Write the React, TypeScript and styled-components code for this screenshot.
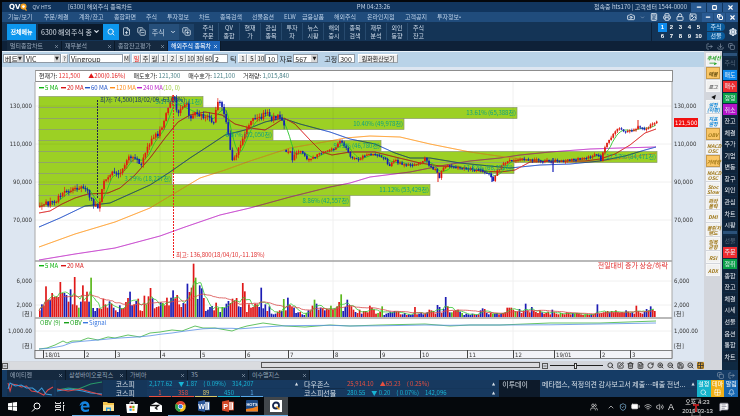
import React from "react";
import styled, { createGlobalStyle, css } from "styled-components";
import {
  Camera, Calculator, Printer, Lock, Image as ImageIcon, Search, Settings, ChevronDown, ChevronUp,
  FilePlus, CopyMinus, CopyPlus, LogOut, Download, Copy, Minus, Square, X, Users, ShieldCheck,
  BatteryFull, Wifi, Volume2, MessageSquareText, Bell, Grid2x2, SquarePen, ZoomIn, ZoomOut,
  Save, Trash2, FileText, RotateCw, SearchCheck,
} from "lucide-react";

const sans = `"Liberation Sans Narrow", "Noto Sans CJK KR", "Liberation Sans", sans-serif`;

const Global = createGlobalStyle`
  * { box-sizing: border-box; }
  body { margin: 0; background: #04070c; font-family: ${sans}; font-size: 7px; line-height: 8px; }
  button, input, select { font: inherit; color: inherit; margin: 0; padding: 0; border: 0; border-radius: 0; background: none; }
  svg { display: block; flex: none; }
  a { color: inherit; text-decoration: none; }
  h1 { margin: 0; }
`;

const Shell = styled.div`
  display: flex;
  flex-direction: column;
  min-height: 100vh;
  padding-top: 2px;
`;
const Framed = styled.div`
  border: solid #05080d;
  border-width: 0 2px;
`;

/* ---------- title and menu ---------- */
const TitleBar = styled.header`
  display: grid;
  grid-template-columns: 1fr auto 1fr;
  align-items: center;
  height: 10px;
  padding-left: 7px;
  background: #11355e;
  color: #c3d3e6;
  font-size: 6px;
`;
const Brand = styled.div`
  display: flex;
  align-items: center;
  gap: 5px;
  white-space: nowrap;
`;
const Logo = styled.h1`
  display: flex;
  align-items: center;
  color: #fff;
  font: bold 7px/9px "DejaVu Sans", sans-serif;
`;
const Product = styled.span`
  margin-right: 12px;
  font: 5px/8px "Liberation Sans", sans-serif;
`;
const TitleRight = styled.div`
  display: flex;
  justify-content: flex-end;
  align-items: center;
  gap: 4px;
  white-space: nowrap;
`;
const WinButtons = styled.div`
  display: flex;
  gap: 1px;
`;
const WinButton = styled.button<{ $w?: number }>`
  display: grid;
  place-items: center;
  width: ${(p) => p.$w ?? 15}px;
  height: 9px;
  background: #295a92;
  color: #fff;
`;
const MenuBar = styled.nav`
  display: flex;
  align-items: center;
  height: 10px;
  padding-left: 6px;
  background: #204c7c;
  color: #b9cee6;
  font-size: 6px;
  white-space: nowrap;
`;
const MenuItem = styled.a<{ $w: number }>`
  width: ${(p) => p.$w}px;
`;
const MenuTools = styled.div`
  display: flex;
  align-items: center;
  gap: 5px;
  margin-left: auto;
  color: #cdd9e6;
`;

/* ---------- main toolbar ---------- */
const ToolBar = styled.div`
  display: flex;
  align-items: center;
  height: 19px;
  padding-left: 5px;
  background: #143456;
  color: #cfdcea;
`;
const AllMenu = styled.button`
  width: 29px;
  height: 16px;
  background: #0d97ee;
  color: #fff;
  font-weight: bold;
  font-size: 6px;
  white-space: nowrap;
`;
const ScreenBox = styled.label`
  display: flex;
  align-items: center;
  width: 65px;
  height: 16px;
  margin-left: 2px;
  padding: 0 3px;
  background: #0b1a2b;
  color: #d7dfe8;
`;
const ScreenInput = styled.input`
  min-width: 0;
  flex: 1;
`;
const IconButton = styled.button<{ $w: number; $bg?: string }>`
  display: grid;
  place-items: center;
  width: ${(p) => p.$w}px;
  height: 16px;
  background: ${(p) => p.$bg ?? "none"};
  color: #e3edf7;
`;
const StockPick = styled.button`
  display: flex;
  align-items: center;
  justify-content: space-around;
  width: 30px;
  height: 16px;
  background: #264f7a;
`;
const Quick = styled.div`
  display: flex;
  margin-left: 4px;
`;
const QuickButton = styled.button`
  width: 21px;
  height: 17px;
  border-right: 1px solid #274a6e;
  font-size: 6px;
  line-height: 8px;
  white-space: pre;
  &:last-child { border-right: 0; }
`;
const PageGrid = styled.div`
  display: grid;
  grid-template-columns: repeat(5, 9px);
  margin-left: auto;
  padding-left: 6px;
  border-left: 1px solid #0c2038;
`;
const PageButton = styled.button<{ $on: boolean }>`
  height: 9px;
  background: ${(p) => (p.$on ? "#0f8cec" : "none")};
  color: #fff;
  font: bold 6px/9px "Liberation Sans", sans-serif;
`;
const Market = styled.div`
  display: grid;
  gap: 1px;
  margin: 0 3px 0 4px;
`;
const MarketButton = styled.button`
  width: 18px;
  height: 8px;
  border-radius: 0 4px 4px 0;
  background: #0a5c9c;
  color: #d6ecff;
  font-size: 6px;
  line-height: 8px;
`;

/* ---------- tabs ---------- */
const TabRow = styled.div<{ $bg: string }>`
  display: flex;
  height: 10px;
  background: ${(p) => p.$bg};
  padding-left: 5px;
  color: #96a6b8;
`;
const Tab = styled.div<{ $on?: boolean; $w: number }>`
  display: flex;
  align-items: center;
  justify-content: space-between;
  width: ${(p) => p.$w}px;
  padding: 0 2px 0 3px;
  border-right: 1px solid #0a1929;
  background: ${(p) => (p.$on ? "#1b63b8" : "#15293f")};
  color: ${(p) => (p.$on ? "#fff" : "inherit")};
  font-size: 6px;
  white-space: nowrap;
`;
const TabTools = styled.div`
  display: flex;
  align-items: center;
  gap: 4px;
  margin-left: auto;
  padding-right: 3px;
`;

/* ---------- workspace ---------- */
const Work = styled.div`
  display: grid;
  grid-template-columns: minmax(0, 1fr) 18px 16px;
`;
const Main = styled.main`
  background: #dde6f1;
`;
const ChartBar = styled.form`
  display: flex;
  align-items: center;
  height: 16px;
  padding: 0 1px 2px;
  border-top: 1px solid #e9f1f8;
  background: #b9d3e8;
  color: #222;
  > * { flex: none; }
`;
const boxed = css`
  height: 9px;
  border: 1px solid #8f9aa5;
  background: #fff;
`;
const Pick = styled.label<{ $w: number }>`
  ${boxed}
  display: flex;
  align-items: center;
  width: ${(p) => p.$w}px;
  padding-left: 1px;
`;
const PickSelect = styled.select`
  appearance: none;
  flex: 1;
  min-width: 0;
`;
const Caret = styled.span`
  align-self: stretch;
  width: 6px;
  background: #d9d9d9;
  font: 5px/7px "DejaVu Sans", sans-serif;
  text-align: center;
`;
const Field = styled.input<{ $w: number }>`
  ${boxed}
  width: ${(p) => p.$w}px;
  padding: 0 1px;
`;
const Key = styled.button<{ $w?: number; $on?: boolean }>`
  width: ${(p) => p.$w ?? 9}px;
  height: 9px;
  border: 1px solid #9aa3ab;
  border-left-color: #fff;
  border-top-color: #fff;
  background: #ececec;
  color: ${(p) => (p.$on ? "#f01818" : "#222")};
  font-size: 6px;
  line-height: 7px;
  white-space: nowrap;
`;
const BarText = styled.label`
  padding: 0 1px;
  white-space: nowrap;
`;
const Spring = styled.span<{ $w: number }>`
  width: ${(p) => p.$w}px;
`;
const Quote = styled.div`
  display: flex;
  align-items: center;
  gap: 8px;
  height: 12px;
  margin: 3px 31px 0 33px;
  padding-left: 3px;
  border: 1px solid #8d8d8d;
  border-left-color: #aaa;
  background: #fff;
  color: #222;
  font-size: 6px;
  white-space: nowrap;
`;
const Val = styled.span<{ $c: string }>`
  color: ${(p) => p.$c};
`;
const Chart = styled.svg`
  width: 100%;
  height: auto;
`;
const ScrollRow = styled.div`
  display: flex;
  align-items: center;
  gap: 2px;
  height: 9px;
  background: #d3d6dc;
  color: #333;
`;
const Track = styled.div`
  flex: 1;
  display: flex;
  height: 7px;
  padding-left: 251px;
  background: #d9dbdf;
`;
const Thumb = styled.div`
  flex: 1;
  height: 6px;
  border: 1px solid #555;
  background: #dcdcdf;
`;
const Tiny = styled.button`
  display: grid;
  place-items: center;
  width: 6px;
  height: 6px;
  border: 1px solid #555;
`;
const ZoomRange = styled.input`
  appearance: none;
  width: 53px;
  height: 7px;
  background: linear-gradient(#222, #222) center / 100% 1px no-repeat;
  &::-webkit-slider-thumb {
    appearance: none;
    width: 3px;
    height: 6px;
    border: 1px solid #333;
    background: #eee;
  }
`;
const FootIcons = styled.div`
  display: flex;
  gap: 3px;
  padding-left: 2px;
`;
const FootButton = styled.button<{ $on?: boolean }>`
  width: 7px;
  height: 7px;
  background: ${(p) => (p.$on ? "#e6a52a" : "none")};
`;

/* ---------- right-hand columns ---------- */
const Indicators = styled.div`
  display: flex;
  flex-direction: column;
  gap: 1px;
  padding: 2px 2px 0;
  background: #d3d6dc;
`;
const Indicator = styled.button<{ $c: string; $on?: boolean; $tall?: boolean; $arrow?: boolean }>`
  height: ${(p) => (p.$arrow ? 6 : p.$tall ? 13 : 12)}px;
  border: ${(p) => (p.$arrow ? 0 : 1)}px solid ${(p) => (p.$on ? "#c99a48" : "#f7f7f7")};
  background: ${(p) => (p.$arrow ? "none" : p.$on ? "#fac665" : "#f1f1f0")};
  color: ${(p) => p.$c};
  font: italic bold 5px/5px "Liberation Sans Narrow", "Noto Sans CJK KR", sans-serif;
  white-space: pre;
`;
const Side = styled.nav`
  display: flex;
  flex-direction: column;
  padding: 2px 1px 8px;
  background: #0f2942;
`;
const Handle = styled.hr`
  width: 100%;
  height: 3px;
  margin: 0;
  border: 0;
  background: #2b527a;
`;
const SideGroup = styled.div<{ $n: number }>`
  display: flex;
  flex-direction: column;
  flex: ${(p) => p.$n} 0 0;
  padding-top: 2px;
  gap: 1px;
`;
const SideButton = styled.button<{ $bg?: string; $dim?: boolean }>`
  flex: 1 0 0;
  min-height: 0;
  background: ${(p) => p.$bg ?? "#10243a"};
  color: ${(p) => (p.$dim ? "#56697d" : "#e8eef4")};
  font-size: 6px;
  line-height: 8px;
`;

/* ---------- ticker ---------- */
const Ticker = styled.section`
  display: grid;
  grid-template-columns: 5px 97px 43px 155px 43px minmax(0, 1fr) 41px 157px 41px;
  height: 17px;
  background: #15365a;
  color: #d7dfe8;
  white-space: nowrap;
`;
const Sparks = styled.div`
  display: grid;
  grid-template-columns: 1fr 1fr;
  gap: 2px;
  padding: 0 1px 1px 0;
`;
const Rows = styled.div<{ $bg?: string; $right?: boolean }>`
  display: grid;
  grid-template-rows: 8px 8px;
  gap: 1px;
  padding-right: ${(p) => (p.$right ? 12 : 0)}px;
  background: ${(p) => p.$bg ?? "none"};
  text-align: ${(p) => (p.$right ? "right" : "left")};
`;
const TickRow = styled.div<{ $c?: string }>`
  display: flex;
  gap: 6px;
  align-items: center;
  padding: 0 2px;
  background: #17395f;
  color: ${(p) => p.$c ?? "#d7dfe8"};
  font-size: ${(p) => (p.$c ? 6 : 7)}px;
`;
const RowEnd = styled.span`
  margin-left: auto;
  padding-right: 2px;
  color: #d7dfe8;
  font: 4px/8px "DejaVu Sans", sans-serif;
`;
const Counts = styled.div`
  display: flex;
  gap: 1px;
`;
const Count = styled.span<{ $c: string }>`
  width: 22px;
  border-bottom: 1px solid ${(p) => p.$c};
  color: ${(p) => p.$c};
  font-size: 6px;
  line-height: 7px;
  text-align: center;
`;
const Shortcuts = styled.div`
  display: grid;
  grid-template-columns: 1fr 1fr 1fr;
`;
const Shortcut = styled.button<{ $bg: string }>`
  display: flex;
  flex-direction: column;
  align-items: center;
  gap: 1px;
  background: ${(p) => p.$bg};
  color: #fff;
  font-size: 6px;
  line-height: 8px;
`;

/* ---------- taskbar ---------- */
const TaskBar = styled.footer`
  display: flex;
  flex: 1;
  min-height: 19px;
  background: #05080c;
  color: #e8e8e8;
`;
const Task = styled.button<{ $open?: boolean; $on?: boolean }>`
  display: grid;
  place-items: center;
  width: 24px;
  border-bottom: ${(p) => (p.$open || p.$on ? 1 : 0)}px solid #6db3e8;
  background: ${(p) => (p.$on ? "#41464b" : "none")};
`;
const Tray = styled.div`
  display: flex;
  align-items: center;
  gap: 4px;
  margin-left: auto;
  padding-right: 11px;
  font: 9px/10px "Liberation Sans", sans-serif;
`;
const People = styled.span`
  margin-right: 5px;
`;
const Clock = styled.time`
  position: relative;
  width: 35px;
  margin-left: 2px;
  font: 6px/9px "Liberation Sans", "Noto Sans CJK KR", sans-serif;
  text-align: center;
  white-space: pre;
`;
const Watermark = styled.svg`
  position: absolute;
  left: 10px;
  top: 0;
`;

/* ---------- data ---------- */
type Pt = [number, number];
const lerp = (pts: Pt[], x: number) => {
  for (let i = 1; i < pts.length; i++) {
    if (x <= pts[i][0]) {
      const [x0, y0] = pts[i - 1];
      const [x1, y1] = pts[i];
      return y0 + ((y1 - y0) * (x - x0)) / (x1 - x0);
    }
  }
  return pts[pts.length - 1][1];
};
const parse = (s: string): Pt[] => s.split(" ").map((p) => p.split(",").map(Number) as Pt);
const noise = (i: number) => {
  const v = Math.sin(i * 127.1 + 11.7) * 43758.5453;
  return v - Math.floor(v);
};
const mean = (a: number[], i: number, n: number) => {
  const part = a.slice(Math.max(0, i - n + 1), i + 1);
  return part.reduce((s, v) => s + v, 0) / part.length;
};

const closes = parse(
  "39,205 48,203 55,200 60,194 63,190 75,189 85,188 89,196 92,204 97,207 100,196 103,182 110,173 120,174 127,158 135,160 140,163 145,150 153,137 158,133 164,120 168,105 171,99 174,100 177,117 181,108 186,103 189,122 193,113 200,115 207,118 213,122 216,102 220,102 224,115 227,130 231,160 236,152 242,140 247,128 252,116 260,120 264,110 270,118 276,116 280,120 283,116 284,150 289,151 292,161 296,152 301,153 308,160 316,155 325,152 333,149 340,141 344,146 350,157 357,160 364,155 372,154 378,156 385,158 388,168 393,160 400,164 410,165 420,163 424,158 430,168 436,170 438,178 443,167 450,165 460,169 470,169 480,170 488,174 492,181 496,171 505,162 515,159 530,160 545,161 560,161 570,160 580,159 590,157 597,154 600,160 604,147 609,140 613,132 618,127 623,132 630,131 638,127 645,129 650,125 656,122",
);
const STEP = 2.07;
const COUNT = 299;
const prices = Array.from({ length: COUNT }, (_, i) => {
  const x = 39 + i * STEP;
  return lerp(closes, x) + (noise(i) - 0.5) * (x < 300 ? 5 : 2.4);
});
const averages = [
  { color: "#cc55d2", points: "39,260 75,254 115,248 160,236 185,227 220,215 250,208 290,197 330,187 350,183 370,177 410,172 440,166 470,161 500,158 520,155 550,152 590,149 620,148 656,147" },
  { color: "#ffac4a", points: "39,247 75,234 115,222 150,208 180,190 200,178 225,170 250,161 290,148 330,141 345,138 370,136 400,137 430,144 470,152 505,157 530,160 570,162 600,161 625,158 656,153" },
  { color: "#4068d0", points: "39,227 60,218 85,206 110,203 130,194 150,185 170,172 190,158 210,145 225,135 245,130 265,122 282,118 300,124 330,132 350,139 375,144 395,153 410,158 430,158 460,163 490,166 510,168 540,165 570,164 600,161 625,156 645,150 656,147" },
  { color: "#e04040", points: "39,213 50,211 62,204 75,198 88,194 108,193 120,188 135,175 150,158 165,138 178,122 190,115 205,112 222,115 235,124 250,128 265,130 275,124 284,118 295,124 310,140 322,152 332,155 350,152 375,152 395,157 420,163 440,166 460,167 480,171 500,172 515,170 530,162 560,161 585,161 600,159 615,154 630,145 645,133 656,129" },
];
const volumeText =
  "R20 B38 R35 R92 R52 B52 R72 R60 R62 R60 R105 R72 B72 B66 R46 B83 R38 R120 R35 G28 B46 R95 R47 R76 B46 G118 B27 B18 B27 R26 R24 R55 R38 R28 B47 R40 B28 R20 B15 B35 R26 R27 R45 R57 B76 B35 R38 B48 R55 R20 R18 R64 G37 R62 R87 B56 R26 R30 R32 B44 G42 R35 R58 R35 B58 B80 R56 R66 R38 R30 B42 R40 B100 R75 R88 R160 G118 B54 B95 B86 R57 B18 B22 B30 B33 R20 R43 G28 B15 G30 B27 B40 B48 R42 R55 R50 R57 B32 B30 R102 R77 R15 R38 R28 R30 R40 R38 B30 B88 B26 B38 R18 B32 B10 B8 B10 R16 R20 B18 G54 R20 B58 R36 R30 B28 B12 B14 R15 B8 B6 G12 B20 R20 R34 G52 B40 R22 B28 R26 B20 R24 R22 G34 R22 G26 R32 R45 G68 B18 B30 B52 R36 R32 R22 B15 R12 R22 B10 R18 R18 R14 R34 R28 R22 R10 G12 R16 G32 B6 B10 B12 B16 B14 B18 R16 R16 R8 B8 B12 R6 B8 B6 B8 R30 R8 B10 B12 B8 R10 B14 R22 R20 R18 R10 B36 B30 R12 B24 B60 R32 B14 G14 R18 R20 R22 B16 G12 B6 B10 B8 B6 B10 R8 B6 R8 B20 B26 R24 B12 B8 R12 G10 B10 B12 R8 B10 R12 R14 R28 R28 R28 R22 G18 R16 B24 R12 R18 B40 R20 R14 B30 R18 R15 R12 R20 B14 R10 R12 R16 R8 B22 R14 R10 R8 G12 R10 R8 R14 R12 R8 B12 G10 R12 R10 R8 R6 G8 R8 R6 B8 R8 R10 B38 R10 R12 R14 R16 R18 B14 R18 R14 R20 R14 R12 R14 R12 B20 R16 R12 B14 R10 R34 R18 R12 R10 B16 B24 R20 B32 R22 R18";
const volumes = volumeText.split(" ").map((t) => ({ kind: t[0], h: Number(t.slice(1)) / 3 }));
const volumeHeights = volumes.map((v) => v.h);
const vx = (i: number) => 39 + (i * 617) / volumes.length;
const line = (arr: number[], n: number, fx: (i: number) => number, fy: (v: number) => number) =>
  arr.map((_, i) => `${fx(i).toFixed(1)},${fy(mean(arr, i, n)).toFixed(1)}`).join(" ");
const obv = parse(
  "39,349 47,348 55,345 63,341 67,343 72,341 80,341 88,338 98,340 108,337 115,338 128,335 140,337 150,333 160,332 172,330 182,331 195,326 203,328 215,328 232,331 240,328 247,326 263,323 285,326 305,327 330,325 350,326 380,325 425,324 450,326 470,325 500,325 550,323 600,323 656,321",
);
const signal = obv.map(([x], i) => {
  const ys = obv.slice(Math.max(0, i - 3), i + 1);
  return `${x},${(ys.reduce((s, p) => s + p[1], 0) / ys.length).toFixed(1)}`;
});
const bands: [number, string][] = [
  [203, "5.17% (25,111천)"], [517, "13.61% (65,388천)"], [404, "10.40% (49,978천)"],
  [273, "6.67% (32,050천)"], [381, "9.75% (46,780천)"], [657, "17.57% (84,471천)"],
  [514, "13.82% (66,352천)"], [172, "3.79% (18,237천)"], [430, "11.12% (53,429천)"], [350, "8.86% (42,557천)"],
];
const months: [number, string][] = [
  [43, "18/01"], [84, "2"], [115, "3"], [160, "4"], [200, "5"], [245, "6"], [288, "7"], [333, "8"],
  [380, "9"], [420, "10"], [467, "11"], [513, "12"], [554, "19/01"], [600, "2"], [630, "3"],
];
const levels: [number, string][] = [
  [106, "130,000"], [144, "110,000"], [182, "90,000"], [220, "70,000"], [281, "6,000"], [305, "2,000"],
  [314, "[천]"], [331, "1,000.00"], [346, "[천]"],
];
const legend: [number, string, string][] = [
  [39, "5 MA", "#10b410"], [61, "20 MA", "#d81414"], [85, "60 MA", "#1f52c8"],
  [110, "120 MA", "#ff8c1a"], [137, "240 MA", "#b81ec8"],
];
const barColor: Record<string, string> = { R: "#e01818", B: "#1c1cb4", G: "#5cb81e" };
const axisFont = { fontFamily: '"DejaVu Sans Condensed", "DejaVu Sans", "Noto Sans CJK KR", sans-serif', fontSize: 6 };

const Legend = ({ x, y, label, color }: { x: number; y: number; label: string; color: string }) => (
  <g fill={color}>
    <rect x={x} y={y - 3} width="5" height="1.4" />
    <text x={x + 6} y={y}>{label}</text>
  </g>
);

const Averages = ({ opacity }: { opacity: number }) => (
  <g fill="none" strokeWidth="1" opacity={opacity}>
    {averages.map((a) => <polyline key={a.color} points={a.points} stroke={a.color} />)}
  </g>
);

const PriceChart = () => (
  <Chart viewBox="2 82 702 279" role="img" aria-label="Vingroup 일봉 차트" fontSize="6">
    <rect x="35" y="82" width="637" height="268" fill="#fff" />
    <path d="M35 106h637M35 144h637M35 182h637M35 220h637M35 281h637M35 305h637M35 331h637M160 82v268M333 82v268M513 82v268" stroke="#f0f0f0" />
    <path d="M35 82v276M672 82v276" stroke="#a8a8a8" />
    <path d="M35 261h637M35 318h637" stroke="#a3a3a3" strokeWidth="1.4" />
    <Averages opacity={1} />
    <g style={{ mixBlendMode: "multiply" }}>
      {bands.map(([end], i) => (
        <rect key={end} x="39" y={96.5 + i * 11} width={end - 39} height="11" fill="#9cd024" stroke="#8b9a6e" strokeWidth="0.7" />
      ))}
    </g>
    <Averages opacity={0.35} />
    <polyline points={line(prices, 6, (i) => 39 + i * STEP, (v) => v)} fill="none" stroke="#28c428" strokeWidth="0.9" />
    {prices.map((close, i) => {
      const open = i ? prices[i - 1] : close + 1;
      const gap = Math.abs(open - close) > 20;
      const start = gap ? close - 2 : open;
      const up = close <= start;
      const top = Math.min(start, close);
      const h = Math.max(1.2, Math.abs(start - close));
      const wick = i < 125 ? 4 : 2;
      const x = 39 + i * STEP;
      return (
        <g key={i} fill={up ? "#e01c10" : "#1420b8"}>
          <rect x={x} y={top} width="1.7" height={h} />
          <rect x={x + 0.5} y={top - noise(i + 400) * wick} width="0.7" height={h + (noise(i + 400) + noise(i + 900)) * wick} />
        </g>
      );
    })}
    <path d="M553 158v14M492 176v6" stroke="#1420b8" strokeWidth="1.2" />
    <path d="M638 120v8M438 172v10" stroke="#e01c10" />
    <path d="M97.5 100v98" stroke="#20244c" strokeDasharray="2 1" />
    <path d="M173.5 95v163" stroke="#f02020" strokeDasharray="2 1" />
    <g fill="#12a282" textAnchor="end">
      {bands.map(([end, label], i) => (
        <text key={label} x={end - 1} y={104 + i * 11}>{label}</text>
      ))}
    </g>
    <text x="100" y="102" fill="#173070">최저: 74,500(18/02/09,-63.08%)</text>
    <text x="176" y="257" fill="#e03030">최고: 136,800(18/04/10,-11.18%)</text>
    {legend.map(([x, label, color]) => <Legend key={label} x={x} y={90} label={label} color={color} />)}
    <text x="163" y="90" fill="#9ccc3c">(10, 0)</text>

    {volumes.map((v, i) => (
      <rect key={i} x={vx(i)} y={317 - v.h} width="1.7" height={v.h} fill={barColor[v.kind]} />
    ))}
    <g fill="none" strokeWidth="0.8">
      <polyline points={line(volumeHeights, 5, vx, (v) => 317 - v)} stroke="#34c834" />
      <polyline points={line(volumeHeights, 20, vx, (v) => 317 - v)} stroke="#d84848" />
      <polyline points={obv.map((p) => p.join(",")).join(" ")} stroke="#3cb43c" />
      <polyline points={signal.join(" ")} stroke="#5a90e6" />
    </g>
    <Legend x={39} y={268} label="5 MA" color="#10b410" />
    <Legend x={61} y={268} label="20 MA" color="#d81414" />
    <text x="668" y="268" fill="#e03030" textAnchor="end" fontSize="7">전일대비 증가 상승/하락</text>
    <text x="40" y="325" fill="#28a828">OBV (9)</text>
    <Legend x={64} y={325} label="OBV" color="#18a018" />
    <Legend x={83} y={325} label="Signal" color="#3a78e0" />

    <rect x="35" y="350.5" width="637" height="8" fill="#f2f3f7" stroke="#666" strokeWidth="0.8" />
    <g {...axisFont} fill="#333">
      {months.map(([x, label]) => (
        <g key={x}>
          <path d={`M${x + 0.5} 350v8`} stroke="#444" />
          <text x={x + 2} y="357">{label}</text>
        </g>
      ))}
      {levels.map(([y, label]) => (
        <g key={y}>
          <text x="32" y={y + 2} textAnchor="end">{label}</text>
          <text x="674" y={y + 2}>{label}</text>
        </g>
      ))}
      <rect x="674" y="118" width="24" height="9" fill="#f01010" />
      <text x="675" y="125" fill="#fff">121,500</text>
    </g>
  </Chart>
);

const menus: [string, number][] = [
  ["기능/보기", 36], ["주문/체결", 35], ["계좌/잔고", 35], ["종합화면", 32], ["주식", 21], ["투자정보", 32], ["차트", 21],
  ["종목검색", 32], ["선물옵션", 32], ["ELW", 18], ["금융상품", 32], ["해외주식", 33], ["온라인지점", 38], ["고객공지", 32], ["투자정보•", 32],
];
const quick = ["주식\n주문", "QV\n종합", "현재\n가", "관심\n종목", "투자\n자", "뉴스\n시황", "해외\n증시", "종목\n검색", "재무\n분석", "외인\n동향", "주식\n잔고"];
const gold = "#a07818";
const sky = "#1488d8";
const indicators: [string, string, boolean, boolean][] = [
  ["매물", "#6a5010", true, false], ["로그", "#666", false, false], ["◀", "#111", false, false],
  ["설정\n(이평)", sky, false, true], ["지표\n설정", sky, false, true], ["OBV", gold, true, false],
  ["MACD\nOSC", gold, false, true], ["거래량", gold, true, false], ["MACD\nOSC", gold, false, true],
  ["Stoc\nSlow", gold, false, true], ["파라\n볼릭", gold, false, true], ["DMI", gold, false, false],
  ["볼린저\n밴드", gold, false, true], ["일목\n균형", gold, false, true], ["RSI", gold, false, false], ["ADX", gold, false, false],
];
const sideTop: [string, string?][] = [
  ["주식", "dim"], ["매도", "#0b87ea"], ["매수", "#ee2c30"], ["정정", "#0ba048"], ["취소", "#b414c8"], ["잔고"], ["체결"],
  ["주가"], ["기업"], ["변동"], ["창구"], ["외인"], ["관심"], ["차트"], ["시황"],
];
const sideBottom: [string, string?][] = [
  ["선물", "dim"], ["주문", "#ee2c30"], ["정취", "#0ba048"], ["종합"], ["잔고"], ["체결"], ["시세"], ["선물"], ["옵션"], ["통합"], ["차트"],
];

const SideList = ({ items }: { items: [string, string?][] }) => (
  <SideGroup $n={items.length}>
    {items.map(([label, tone], i) => (
      <SideButton key={i} $dim={tone === "dim"} $bg={tone === "dim" ? undefined : tone}>{label}</SideButton>
    ))}
  </SideGroup>
);

const TabItem = ({ label, w, on }: { label: string; w: number; on?: boolean }) => (
  <Tab $w={w} $on={on}>
    <button>{label}</button>
    <button aria-label={`${label} 닫기`}><X size={5} strokeWidth={3} /></button>
  </Tab>
);

const Combo = ({ w, label, value }: { w: number; label: string; value: string }) => (
  <Pick $w={w}>
    <PickSelect aria-label={label} defaultValue={value}><option>{value}</option></PickSelect>
    <Caret>▼</Caret>
  </Pick>
);

const Spark = ({ lines }: { lines: [string, string][] }) => (
  <svg viewBox="0 0 46 16" width="100%" height="16" preserveAspectRatio="none">
    <rect width="46" height="16" fill="#16304e" />
    {lines.map(([c, d]) => <path key={c} d={d} fill="none" stroke={c} />)}
  </svg>
);

const QLogo = () => (
  <svg width="7" height="8" viewBox="0 0 8 9">
    <circle cx="4" cy="4" r="3.5" fill="#f8a01c" />
    <circle cx="4" cy="4" r="1.5" fill="#fff" />
    <path d="M4.5 5.5 7.5 8.500" stroke="#f8a01c" strokeWidth="1.5" />
  </svg>
);

const OfficeIcon = ({ color, letter }: { color: string; letter: string }) => (
  <svg width="12" height="12" viewBox="0 0 12 12">
    <rect x="5" y="2" width="6.5" height="8" fill="#fff" stroke={color} strokeWidth=".8" />
    <path d="M7 4h3M7 6h3M7 8h3" stroke={color} strokeWidth=".8" />
    <path d="M0 1.500 7 0v12L0 10.500z" fill={color} />
    <text x="3.5" y="8.5" fill="#fff" fontSize="7" fontWeight="bold" textAnchor="middle" fontFamily="Liberation Sans">{letter}</text>
  </svg>
);

const tasks: { name: string; open?: boolean; on?: boolean; icon: React.ReactNode }[] = [
  { name: "시작", icon: <svg width="9" height="9" viewBox="0 0 9 9"><path d="M0 1.300 4 .7v3.500H0zM4.600.6 9 0v4.200H4.600zM0 4.800h4v3.500L0 7.700zM4.600 4.800H9V9l-4.400-.6z" fill="#fff" /></svg> },
  { name: "검색", icon: <svg width="10" height="10" viewBox="0 0 10 10" fill="none" stroke="#fff"><circle cx="6" cy="4" r="3" /><path d="M4 6.500 1 9.500" /></svg> },
  { name: "작업 보기", icon: <svg width="10" height="9" viewBox="0 0 10 9" fill="none" stroke="#ddd"><path d="M.5 0v1.500h5V0M.5 3.500h5v2h-5zM.5 9V7.500h5V9M8.500 0v2M8.500 4v5" /><path d="M8 3.500h1.500" stroke="#fff" /></svg> },
  { name: "Edge", open: true, icon: <svg width="11" height="11" viewBox="0 0 11 11"><path d="M.5 5C1 2 3 .3 5.700.3c3 0 4.800 2.200 4.800 5v1.200H4c.2 1.600 1.500 2.300 3 2.300 1.200 0 2.200-.3 3-.8v2.200c-1 .5-2.200.8-3.600.8C3.500 11 1.700 9.200 1.700 6.800c0-1.600.8-2.800 2-3.500C2.300 3.500 1.200 4.200.5 5zM4 4.700h3.800C7.700 3.500 7 2.800 6 2.800S4.200 3.500 4 4.700z" fill="#1584e0" /></svg> },
  { name: "파일 탐색기", open: true, icon: <svg width="11" height="10" viewBox="0 0 11 10"><path d="M0 1h4l1 1h6v8H0z" fill="#f4c44c" /><path d="M0 4h11v6H0z" fill="#fbe194" /><path d="M3 10V6.500h5V10H6.700V8H4.300v2z" fill="#2d9ce0" /></svg> },
  { name: "스토어", icon: <svg width="12" height="12" viewBox="0 0 12 12"><path d="M4 3.500V1h4v2.500" fill="none" stroke="#fff" /><path d="M0 3h12l-1 9H1z" fill="#fff" /><path d="M3.500 4.800h2.200V7H3.500z" fill="#f04a20" /><path d="M6.300 4.800h2.200V7H6.300z" fill="#78b414" /><path d="M3.500 7.600h2.200v2.200H3.500z" fill="#1c9ce8" /><path d="M6.300 7.600h2.200v2.200H6.300z" fill="#f8b410" /></svg> },
  { name: "메일", icon: <svg width="12" height="10" viewBox="0 0 12 10"><path d="M0 3.500 6 0l6 3.500V10H0z" fill="#fff" /><path d="m0 3.500 8.500 0-3 2.500 2 1.500" fill="none" stroke="#111" strokeWidth="1.3" /></svg> },
  { name: "Chrome", open: true, icon: <svg width="11" height="11" viewBox="0 0 11 11"><circle cx="5.5" cy="5.5" r="5.3" fill="#f4c020" /><path d="M5.500 5.500.9 2.800A5.300 5.300 0 0 1 10.300 3z" fill="#dc4030" /><path d="M5.500 5.500.9 2.800A5.300 5.300 0 0 0 5 10.800z" fill="#2ca04c" /><circle cx="5.5" cy="5.5" r="2.6" fill="#fff" /><circle cx="5.5" cy="5.5" r="2" fill="#3b78e0" /></svg> },
  { name: "Word", open: true, icon: <OfficeIcon color="#2b579a" letter="W" /> },
  { name: "PowerPoint", open: true, icon: <OfficeIcon color="#d24726" letter="P" /> },
  { name: "HOTS", open: true, icon: <svg width="12" height="12" viewBox="0 0 12 12"><rect width="12" height="12" rx="1" fill="#1d4a86" /><path d="M0 9q6 0 12-3v5.500H0z" fill="#f08020" /><text x="6" y="6" fill="#fff" fontSize="4" fontWeight="bold" textAnchor="middle" fontFamily="Liberation Sans">HOTS</text></svg> },
  { name: "QV", on: true, icon: <svg width="12" height="12" viewBox="0 0 12 12"><rect width="12" height="12" fill="#fff" /><circle cx="6" cy="5.5" r="3" fill="none" stroke="#16244c" strokeWidth="1.8" /><path d="m6.500 6.500 3 3" stroke="#f0a020" strokeWidth="1.5" /></svg> },
];

export default function App() {
  return (
    <Shell>
      <Global />
      <Framed>
        <TitleBar>
          <Brand>
            <Logo>QV<QLogo /></Logo>
            <Product>QV HTS</Product>
            <span>[6300] 해외주식 종목차트</span>
          </Brand>
          <span>PM 04:23:26</span>
          <TitleRight>
            <span>접속중 hts170 | 고객센터 1544-0000</span>
            <WinButtons>
              <WinButton aria-label="최소화"><Minus size={6} strokeWidth={5} /></WinButton>
              <WinButton aria-label="최대화"><Square size={5} strokeWidth={5} /></WinButton>
              <WinButton aria-label="닫기"><X size={7} strokeWidth={4} /></WinButton>
            </WinButtons>
          </TitleRight>
        </TitleBar>
        <MenuBar>
          {menus.map(([label, w]) => <MenuItem key={label + w} href="#" $w={w}>{label}</MenuItem>)}
          <MenuTools>
            <Camera size={8} strokeWidth={3} />
            <ChevronDown size={5} />
            <Calculator size={8} strokeWidth={3} />
            <Printer size={8} strokeWidth={3} />
            <Lock size={8} strokeWidth={3} />
            <ImageIcon size={8} strokeWidth={3} />
            <WinButtons>
              <WinButton $w={11} aria-label="창 최소화"><Minus size={6} strokeWidth={5} /></WinButton>
              <WinButton $w={11} aria-label="창 복원"><Copy size={6} strokeWidth={4} /></WinButton>
              <WinButton $w={12} aria-label="창 닫기"><X size={7} strokeWidth={4} /></WinButton>
            </WinButtons>
          </MenuTools>
        </MenuBar>
        <ToolBar>
          <AllMenu>전체메뉴</AllMenu>
          <ScreenBox>
            <ScreenInput aria-label="화면번호" defaultValue="6300 해외주식 종" />
            <ChevronDown size={7} strokeWidth={4} />
          </ScreenBox>
          <IconButton $w={16} $bg="#0d97ee" aria-label="검색"><Search size={8} strokeWidth={3} /></IconButton>
          <IconButton $w={15} aria-label="새 화면"><FilePlus size={9} /></IconButton>
          <IconButton $w={15} aria-label="화면 닫기"><CopyMinus size={9} /></IconButton>
          <StockPick>주식<ChevronDown size={6} strokeWidth={4} /></StockPick>
          <IconButton $w={15} $bg="#1d4269" aria-label="추가"><CopyPlus size={9} /></IconButton>
          <Quick>{quick.map((q) => <QuickButton key={q}>{q}</QuickButton>)}</Quick>
          <PageGrid>
            {Array.from({ length: 10 }, (_, i) => <PageButton key={i} $on={i === 0}>{i + 1}</PageButton>)}
          </PageGrid>
          <Market><MarketButton>주식</MarketButton><MarketButton>선물</MarketButton></Market>
          <IconButton $w={10} aria-label="설정"><Settings size={8} strokeWidth={4} /></IconButton>
        </ToolBar>
        <TabRow $bg="#0e2138">
          <TabItem label="멀티종합차트" w={55} />
          <TabItem label="재무분석" w={53} />
          <TabItem label="종합잔고평가" w={53} />
          <TabItem label="해외주식 종목차" w={53} on />
          <TabTools><LogOut size={7} /><Download size={7} /><Copy size={7} /></TabTools>
        </TabRow>

        <Work>
          <Main>
            <ChartBar onSubmit={(e) => e.preventDefault()}>
              <Combo w={21} label="국가" value="베트남" />
              <Combo w={37} label="종목코드" value="VIC" />
              <Key type="button" $w={7}>?</Key>
              <Spring $w={1} />
              <Field $w={54} aria-label="종목명" defaultValue="Vingroup" />
              <Key type="button" $w={7}>M</Key>
              <Spring $w={2} />
              {["일", "주", "월", "1", "2", "5", "10", "30", "60"].map((k, i) => (
                <Key type="button" key={k} $on={i === 0}>{k}</Key>
              ))}
              <Field $w={15} aria-label="분" defaultValue="2" />
              <Spring $w={1} />
              <BarText as="span">틱</BarText>
              <Spring $w={1} />
              {["1", "5", "10"].map((k) => <Key type="button" key={k}>{k}</Key>)}
              <Field $w={13} aria-label="틱 수" defaultValue="10" />
              <BarText htmlFor="count">자료</BarText>
              <Pick $w={25}>
                <PickSelect id="count" defaultValue="567"><option>567</option></PickSelect>
                <Caret>▼</Caret>
              </Pick>
              <Spring $w={5} />
              <BarText htmlFor="fixed">고정</BarText>
              <Field id="fixed" $w={17} defaultValue="300" />
              <Spring $w={3} />
              <Key type="button" $w={40}>원화환산보기</Key>
            </ChartBar>
            <Quote>
              <span>현재가: <Val $c="#e83030">121,500</Val></span>
              <Val $c="#e01818">▲200(0.16%)</Val>
              <span>매도호가: <Val $c="#4a8288">121,300</Val></span>
              <span>매수호가: <Val $c="#4a8288">121,100</Val></span>
              <span>거래량: <Val $c="#4a8288">1,015,840</Val></span>
            </Quote>
            <PriceChart />
            <ScrollRow>
              <Tiny aria-label="이전"><Minus size={4} strokeWidth={4} /></Tiny>
              <Track><Thumb /></Track>
              <Tiny aria-label="축소"><Minus size={4} strokeWidth={4} /></Tiny>
              <ZoomRange type="range" aria-label="확대 비율" defaultValue={47} />
              <FootIcons>
                {[Search, SquarePen, Trash2, FileText, RotateCw, ZoomIn, ZoomOut, Save, SearchCheck, Grid2x2].map((Icon, i) => (
                  <FootButton key={i} $on={i === 9} aria-label={`도구 ${i + 1}`}><Icon size={7} strokeWidth={3} /></FootButton>
                ))}
              </FootIcons>
            </ScrollRow>
          </Main>
          <Indicators>
            <Indicator $c="#28a428" $tall>{"추세선\n━▸"}</Indicator>
            {indicators.map(([label, c, on, tall], i) => (
              <Indicator key={i} $c={c} $on={on} $tall={tall} $arrow={label === "◀"}>{label}</Indicator>
            ))}
          </Indicators>
          <Side>
            <Handle />
            <SideList items={sideTop} />
            <Handle />
            <SideList items={sideBottom} />
          </Side>
        </Work>

        <TabRow $bg="#153c66">
          <TabItem label="에이티젠" w={59} />
          <TabItem label="삼성바이오로직스" w={61} />
          <TabItem label="가비아" w={61} />
          <TabItem label="3S" w={61} />
          <TabItem label="이수앱지스" w={61} />
          <TabTools><Copy size={7} /><LogOut size={7} /></TabTools>
        </TabRow>
        <Ticker>
          <span />
          <Sparks>
            <Spark lines={[["#e04848", "M1 3 3 11 5 4 10 5l4 2 5-1 5 5 6 1 6 3 4-5 5-3"], ["#3c9cdc", "M1 9 3 3l5 3 6-1 5 3 6 0 5 4 4-4 4 6 6 1"]]} />
            <Spark lines={[["#289868", "M1 10 12 8 22 9 34 4 45 2"], ["#3c9cdc", "M1 11 14 9l12 2 8 2 11 1"], ["#d84848", "M1 9 12 11 24 9l10 3 11 3"]]} />
          </Sparks>
          <Rows $right><span>코스피</span><span>코스피</span></Rows>
          <Rows>
            <TickRow $c="#18b4d4"><span>2,177.62</span><span>▼ 1.87</span><span>( 0.09%)</span><span>314,207</span><RowEnd>▲</RowEnd></TickRow>
            <TickRow><Counts>
              <Count $c="#e85040">1</Count><Count $c="#e85040">358</Count><Count $c="#d8c468">89</Count>
              <Count $c="#18b4d4">450</Count><Count $c="#58a8e8">1</Count>
            </Counts></TickRow>
          </Rows>
          <Rows $bg="#122c4a"><TickRow>다우존스</TickRow><TickRow>코스피선물</TickRow></Rows>
          <Rows>
            <TickRow $c="#e85040"><span>25,914.10</span><span>▲65.23</span><span>( 0.25%)</span><RowEnd>▲</RowEnd></TickRow>
            <TickRow $c="#18b4d4"><span>280.55</span><span>▼ 0.20</span><span>( 0.07%)</span><span>142,096</span><RowEnd>▲</RowEnd></TickRow>
          </Rows>
          <Rows $bg="#0d1a2a" $right><span>이투데이</span></Rows>
          <Rows><TickRow>메타랩스, 적정의견 감사보고서 제출…매출 전년...<RowEnd>▲</RowEnd></TickRow><TickRow /></Rows>
          <Shortcuts>
            <Shortcut $bg="#16b4cc">설정<Search size={7} /></Shortcut>
            <Shortcut $bg="#f0b018">테마<Grid2x2 size={7} /></Shortcut>
            <Shortcut $bg="#1766b0">알림<Bell size={7} /></Shortcut>
          </Shortcuts>
        </Ticker>
      </Framed>
      <TaskBar>
        {tasks.map((t) => <Task key={t.name} aria-label={t.name} $open={t.open} $on={t.on}>{t.icon}</Task>)}
        <Tray>
          <People><Users size={8} /></People>
          <ChevronUp size={8} />
          <ShieldCheck size={8} color="#8cc8f0" />
          <BatteryFull size={9} fill="#fff" />
          <Wifi size={8} />
          <Volume2 size={8} />
          <span>A</span>
          <Clock>
            {"오후 4:23\n2019-03-13"}
            <Watermark width="38" height="19" viewBox="0 0 38 19" opacity="0.8">
              <path d="M1 1h10M1 18h10M2 1v3l4 5 4-5V1M2 18v-3l4-6 4 6v3" fill="none" stroke="#8a8a8a" />
              <path d="M3 6h6v2H7v6H5V8H3z" fill="#d82020" />
            </Watermark>
          </Clock>
          <MessageSquareText size={10} fill="#fff" color="#889" />
        </Tray>
      </TaskBar>
    </Shell>
  );
}
